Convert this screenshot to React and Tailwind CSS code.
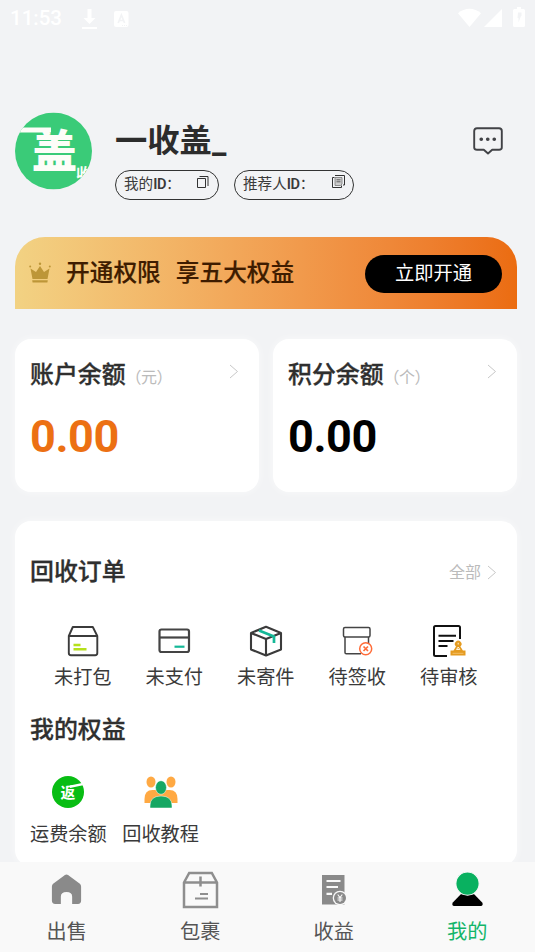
const StatusBar = () => {
  return (
    <div className="flex h-[37px] items-center pl-[10px] pr-[10px] text-white">
      <span className="w-[52px] text-[20.500px] font-medium leading-[37px]">11:53</span>
      <svg className="ml-[19px] h-[22px] w-[17px]" viewBox="0 0 17 22" fill="currentColor">
        <path d="M6.500 1h4v9h4l-6 6-6-6h4zM1 19h15v2H1z" />
      </svg>
      <svg className="ml-[16px] h-[16px] w-[15px]" viewBox="0 0 15 16">
        <rect width="14.500" height="16" rx="2" fill="#fff" />
        <path d="M4.200 12 7.400 4l3.200 8M5.300 9.500h4.200" fill="none" stroke="#f2f3f5" strokeWidth="1.700" />
        <path d="M8 14.500h5" stroke="#f2f3f5" strokeWidth="1" strokeDasharray="1 1" />
      </svg>
      <div className="ml-auto mt-[-3px] flex items-center">
        <svg className="h-[19px] w-[23px]" viewBox="0 0 23 19" fill="currentColor">
          <path d="M11.500 19 0 5.300C6.500-.8 16.500-.8 23 5.300z" />
        </svg>
        <svg className="ml-[3px] mt-[2px] h-[18px] w-[18px]" viewBox="0 0 18 18" fill="currentColor">
          <path d="M18 0v18H0z" />
        </svg>
        <svg className="ml-[11px] h-[20px] w-[12px]" viewBox="0 0 12 20">
          <path d="M4 0h4v2h2.500q1.500 0 1.500 1.500v15q0 1.500-1.500 1.500h-9Q0 20 0 18.500v-15Q0 2 1.500 2H4z" fill="#fff" />
          <path d="M5 5.500h3.500V9H8L5.500 15.500V11H4.500z" fill="#f2f3f5" />
        </svg>
      </div>
    </div>
  );
};

const Avatar = () => {
  return (
    <svg className="h-[78px] w-[77px] shrink-0" viewBox="0 0 77 77">
      <defs>
        <clipPath id="avatar">
          <circle cx="38.500" cy="38.500" r="38.500" />
        </clipPath>
      </defs>
      <g clipPath="url(#avatar)">
        <rect width="77" height="77" fill="#3acb78" />
        <path d="M4 15h32v5H4z" fill="#fdfdf8" />
        <text x="16.800" y="55.300" fontSize="45.500" fontWeight="900" fill="#fdfdf8">盖</text>
        <text x="61" y="66" fontSize="15" fontWeight="700" fill="#fdfdf8">收</text>
      </g>
    </svg>
  );
};

const Arrow = () => {
  return (
    <svg className="h-[15px] w-[10px]" viewBox="0 0 10 15" fill="none" stroke="#c8c8c8" strokeWidth="1">
      <path d="M1 1l7.500 6.500L1 14" />
    </svg>
  );
};

const Profile = () => {
  return (
    <div className="mt-[75px] flex h-[88px] pl-[15px]">
      <Avatar />
      <div className="ml-[23px] pt-[7px]">
        <h1 className="h-[44px] whitespace-nowrap text-[32.300px] font-bold leading-[44px] text-[#2c2c2c]">一收盖_</h1>
        <div className="mt-[7px] flex gap-[15px] text-[14.600px] text-[#3a3a3a]">
          <div className="flex h-[30px] w-[104px] justify-between rounded-full border border-[#333] pl-2 pr-[9px] leading-[27px]">
            <span className="whitespace-nowrap">我的<b className="font-semibold tracking-[-0.4px]">ID</b>：</span>
            <svg className="-ml-3 mt-[5px] h-[12px] w-[12px]" viewBox="0 0 12 12" fill="none" stroke="#333">
              <path d="M.5 2.500h8v9h-8zM2.500.5h8.500v9.500" />
            </svg>
          </div>
          <div className="flex h-[30px] w-[120px] justify-between rounded-full border border-[#333] pl-2 pr-[8px] leading-[27px]">
            <span className="whitespace-nowrap">推荐人<b className="font-semibold tracking-[-0.4px]">ID</b>：</span>
            <svg className="-ml-3 mt-[4px] h-[13px] w-[13px]" viewBox="0 0 13 13" fill="none" stroke="#333">
              <path d="M2.500 2.500h-2v10h9v-2" />
              <path d="M3 .5h9.500v9.500H11" />
              <path d="M3 2.500h7v6.500L8.500 10.500H3z" fill="#ccc" stroke="#777" strokeWidth=".8" />
              <path d="M4.500 4.800h4M4.500 6.800h4" stroke="#444" strokeWidth=".8" />
            </svg>
          </div>
        </div>
      </div>
      <svg className="ml-[118px] mt-[14px] h-[30px] w-[32px]" viewBox="0 0 32 30" fill="none" stroke="#414246" strokeWidth="1.900">
        <path d="M5 2.200h22q2.800 0 2.800 2.800v16.500q0 2.200-2.800 2.200h-6.800L16 27.500l-4.200-3.800H5q-2.800 0-2.800-2.200V5q0-2.800 2.800-2.800z" strokeLinejoin="round" />
        <path d="M9.200 13.300h.1M15.700 13.300h.1M22.200 13.300h.1" strokeWidth="3.600" strokeLinecap="round" />
      </svg>
    </div>
  );
};

const VipBanner = () => {
  return (
    <div className="ml-[15px] mt-[37px] flex h-[72px] w-[502px] items-center rounded-t-[30px] bg-linear-to-r from-[#f2d283] to-[#eb6c10] pl-[14px] pr-[15px]">
      <svg className="h-[22px] w-[22px]" viewBox="0 0 22 22" fill="#bd9638">
        <path d="M1.500 6.500 7 10l4-6 4 6 5.500-3.500L18.500 17h-15zM3.200 18.200h15.600l-.4 2.300H3.600z" />
        <circle cx="1.200" cy="4.500" r="1" />
        <circle cx="11" cy="1.800" r="1.200" />
        <circle cx="20.800" cy="4.500" r="1" />
      </svg>
      <span className="ml-[15px] mt-[1px] flex gap-[15px] text-[23.700px] font-medium text-[#3e1c00] [-webkit-text-stroke:0.2px]">
        <span>开通权限</span>
        <span>享五大权益</span>
      </span>
      <button className="ml-auto mt-px h-[38px] w-[137px] rounded-full bg-black text-[19.300px] leading-[38px] text-white">
        立即开通
      </button>
    </div>
  );
};

const BalanceCard = ({ title, unit, color }) => {
  return (
    <div className="h-[153px] w-[244px] rounded-[16px] bg-white px-[15px] pt-[19px] shadow-[0_0_8px_rgba(255,255,255,0.6)]">
      <div className="flex h-[34px] text-[#2f2f2f]">
        <h2 className="text-[23.900px] font-medium leading-[35px] [-webkit-text-stroke:0.3px]">{title}</h2>
        <span className="ml-[8px] text-[16px] leading-[39px] tracking-[-0.500px] text-[#bbb] [font-feature-settings:'halt']">
          {unit}
        </span>
        <span className="ml-auto mr-[5px] mt-[6px]"><Arrow /></span>
      </div>
      <p className={`mt-[17px] text-[45px] font-bold leading-[56px] tracking-[-0.400px] ${color}`}>0.00</p>
    </div>
  );
};

const PackIcon = () => (
  <svg className="h-[34px] w-[34px]" viewBox="0 0 34 34" fill="none" stroke="#3b3b3b" strokeWidth="1.900" strokeLinejoin="round">
    <path d="M2.800 12 6.800 3h20l4.500 9v17q0 2.200-2.200 2.200H5q-2.200 0-2.200-2.200zM2.800 12h28.500" />
    <path d="M7.500 21h7M7.500 25.200h13" stroke="#b5e01b" strokeWidth="2.400" />
  </svg>
);

const CardIcon = () => (
  <svg className="h-[34px] w-[34px]" viewBox="0 0 34 34" fill="none" stroke="#444" strokeWidth="2.200">
    <rect x="2.500" y="5.500" width="29.500" height="22.500" rx="2" />
    <path d="M2.500 13.500h29.500" />
    <path d="M17.500 22.700h10" stroke="#14b897" strokeWidth="2.200" />
  </svg>
);

const CubeIcon = () => (
  <svg className="h-[34px] w-[34px]" viewBox="0 0 34 34" fill="none" stroke="#3b3b3b" strokeWidth="2.100" strokeLinejoin="round">
    <path d="m17 2.800 15 6.200v16.500L17 31.500 2 25.500V9zM2 9l15 6 15-6M17 15v16.500" />
    <path d="m10 6.500 15 6V19" stroke="#14b897" strokeWidth="2.700" />
  </svg>
);

const ReceiveIcon = () => (
  <svg className="h-[34px] w-[34px]" viewBox="0 0 34 34" fill="none" stroke="#444" strokeWidth="1.500">
    <path d="M5 13v15.500q0 1.300 1.300 1.300H21M28.500 13v9" />
    <rect x="3.500" y="3.500" width="26.500" height="9.500" rx="1.500" />
    <circle cx="25.700" cy="24.700" r="6" fill="#fff" stroke="#ff6c38" />
    <path d="m23.500 22.500 4.500 4.500m0-4.500L23.500 27" stroke="#ff6c38" strokeWidth="1.700" />
  </svg>
);

const AuditIcon = () => (
  <svg className="h-[34px] w-[34px]" viewBox="0 0 34 34" fill="none" stroke="#111" strokeWidth="2">
    <path d="M28 15V3.500q0-1.500-1.500-1.500h-23Q2 2 2 3.500v27q0 1.500 1.500 1.500H15" />
    <path d="M6.500 11.700H24M6.500 16.900h15M6.500 22h9" />
    <path d="M18.500 31.500v-5h3l2.500-4a3.300 3.300 0 1 1 4.400 0l2.500 4h2.600v5z" fill="#e59b20" stroke="none" />
    <path d="M24.500 25.500 26.200 23l1.700 2.500zM26.200 18.800v1.700" stroke="#fff5df" strokeWidth="1" />
    <path d="M20.500 29.300h11" stroke="#f6c779" strokeWidth=".8" />
  </svg>
);

const orders = [
  { label: "未打包", Icon: PackIcon },
  { label: "未支付", Icon: CardIcon },
  { label: "未寄件", Icon: CubeIcon },
  { label: "待签收", Icon: ReceiveIcon },
  { label: "待审核", Icon: AuditIcon },
];

const RebateIcon = () => (
  <svg className="h-[34px] w-[34px]" viewBox="0 0 34 34">
    <circle cx="17" cy="17" r="16" fill="#08bd13" />
    <path d="M19 10.500 31 8l1 2.300L19 13z" fill="#fff" />
    <text x="9.500" y="22.800" fontSize="14.800" fontWeight="700" fill="#fff">返</text>
  </svg>
);

const TeamIcon = () => (
  <svg className="h-[36px] w-[36px]" viewBox="0 0 36 36">
    <g fill="#ffa943">
      <ellipse cx="8" cy="8" rx="4.500" ry="5.500" />
      <ellipse cx="28" cy="8" rx="4.500" ry="5.500" />
      <path d="M1.500 29v-4q0-9 8-9H26.500q8 0 8 9v4z" />
    </g>
    <ellipse cx="18" cy="13.500" rx="5.500" ry="6.800" fill="#16a763" stroke="#fff" strokeWidth=".5" />
    <path d="M7 34v-2q0-10 11-10t11 10v2z" fill="#16a763" stroke="#fff" strokeWidth=".5" />
  </svg>
);

const OrderPanel = () => {
  return (
    <div className="ml-[15px] mt-[29px] h-[345px] w-[502px] rounded-[16px] bg-white px-[15px] pt-[33px] shadow-[0_0_8px_rgba(255,255,255,0.6)]">
      <div className="flex h-[36px] items-center justify-between">
        <h2 className="text-[23.900px] font-medium leading-[36px] text-[#2f2f2f] [-webkit-text-stroke:0.3px]">回收订单</h2>
        <div className="mr-[5px] mt-[1px] flex items-center gap-[6px] text-[16px] text-[#bbb]">
          <span>全部</span>
          <Arrow />
        </div>
      </div>
      <div className="ml-[7px] mt-[34px] flex">
        {orders.map(({ label, Icon }) => (
          <div key={label} className="flex w-[91.500px] flex-col items-center">
            <Icon />
            <span className="mt-[6px] text-[19.200px] leading-[28px] text-[#3a3a3a]">{label}</span>
          </div>
        ))}
      </div>
      <h2 className="mt-[20px] text-[23.900px] font-medium leading-[36px] text-[#2f2f2f] [-webkit-text-stroke:0.3px]">我的权益</h2>
      <div className="mt-[26px] flex gap-[15.500px]">
        <div className="flex flex-col items-center">
          <span className="flex h-[36px] items-center"><RebateIcon /></span>
          <span className="mt-[11px] text-[19.200px] leading-[28px] text-[#3a3a3a]">运费余额</span>
        </div>
        <div className="flex flex-col items-center">
          <TeamIcon />
          <span className="mt-[11px] text-[19.200px] leading-[28px] text-[#3a3a3a]">回收教程</span>
        </div>
      </div>
    </div>
  );
};

const HomeIcon = () => (
  <svg className="h-[37px] w-[37px]" viewBox="0 0 36 36" fill="#8a8a8a">
    <path d="M16.500 3.800q1.500-1 3 0L31 12.500q1.200 1 1.200 2.500v14q0 3-3 3h-5.700v-7q0-4.500-5.500-4.500t-5.500 4.500v7H7q-3.200 0-3.200-3V15q0-1.500 1.200-2.500z" />
  </svg>
);

const ParcelIcon = () => (
  <svg className="h-[38px] w-[37px]" viewBox="0 0 37 38" fill="none" stroke="#8e8e8e" strokeWidth="2.500">
    <path d="M2 11.500 7.200 2h22.600l5.200 9.500V36H2zM2 11.500h33M18.500 5.500v10" />
    <path d="M18 23h8M13 27.500h13" strokeWidth="2" />
  </svg>
);

const IncomeIcon = () => (
  <svg className="h-[37px] w-[36px]" viewBox="0 0 36 37" fill="#8a8a8a">
    <path d="M6 4h22.500v29.500H6z" />
    <path d="M10.500 10h14M10.500 16h11.500M10.500 22.800h5.500" stroke="#f9f9f9" strokeWidth="2.200" />
    <circle cx="24" cy="27" r="7.300" fill="#f9f9f9" />
    <circle cx="24" cy="27" r="6" />
    <path d="m21.700 23.500 2.300 3 2.300-3M21.500 27h5M21.500 29h5M24 26.500V31" fill="none" stroke="#f9f9f9" strokeWidth="1.100" />
  </svg>
);

const MineIcon = () => (
  <svg className="h-[37px] w-[37px]" viewBox="0 0 36 36">
    <path d="M11.500 22.500h13l8 8.500q1 3-1.500 3H5q-2.500 0-1.500-3z" />
    <circle cx="18" cy="12.200" r="11.300" fill="#09b160" stroke="#f9f9f9" strokeWidth="1" />
  </svg>
);

const tabs = [
  { label: "出售", Icon: HomeIcon },
  { label: "包裹", Icon: ParcelIcon },
  { label: "收益", Icon: IncomeIcon },
  { label: "我的", Icon: MineIcon, active: true },
];

const TabBar = () => {
  return (
    <nav className="grid h-[90px] shrink-0 grid-cols-4 bg-[#f9f9f9] pr-px pt-[9px]">
      {tabs.map(({ label, Icon, active }) => (
        <div key={label} className="flex flex-col items-center">
          <span className="h-[38px]"><Icon /></span>
          <span className={`mt-[8px] text-[20.200px] leading-[30px] ${active ? "text-[#12b569]" : "text-[#555]"}`}>
            {label}
          </span>
        </div>
      ))}
    </nav>
  );
};

const App = () => {
  return (
    <div className="flex h-[952px] w-[535px] flex-col overflow-hidden bg-[#f2f3f5] font-[Roboto,'Noto_Sans_CJK_SC',sans-serif]">
      <main className="h-[862px] shrink-0 overflow-hidden">
        <StatusBar />
        <Profile />
        <VipBanner />
        <div className="ml-[15px] mt-[30px] flex gap-[14px]">
          <BalanceCard title="账户余额" unit="（元）" color="text-[#ec7013]" />
          <BalanceCard title="积分余额" unit="（个）" color="text-black" />
        </div>
        <OrderPanel />
      </main>
      <TabBar />
    </div>
  );
};

export default App;
